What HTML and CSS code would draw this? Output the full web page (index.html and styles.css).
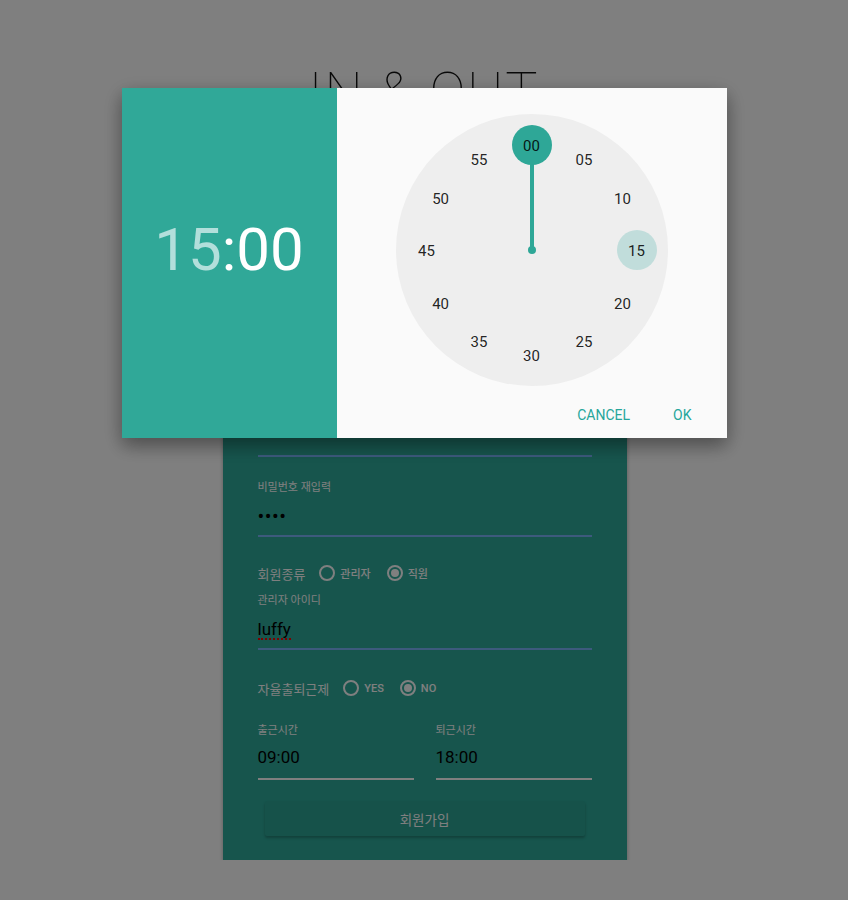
FILE: index.html
```html
<!DOCTYPE html>
<html lang="ko">
<head>
<meta charset="UTF-8">
<meta name="viewport" content="width=device-width, initial-scale=1.0">
<title>IN &amp; OUT - 회원가입</title>
<link rel="stylesheet" href="styles.css">
</head>
<body>
    <div class="page">
        <h1 class="logo">IN &amp; OUT</h1>

        <!-- Join form -->
        <form class="join-card">
            <div class="field">
                <label>아이디</label>
                <div class="value">luffy01</div>
            </div>
            <div class="field">
                <label>이름</label>
                <div class="value">몽키 D. 루피</div>
            </div>
            <div class="field">
                <label>비밀번호</label>
                <div class="value dots">••••</div>
            </div>
            <div class="field">
                <label>비밀번호 재입력</label>
                <div class="value dots">••••</div>
            </div>

            <div class="choice-row type-row">
                <span class="choice-title">회원종류</span>
                <span class="option"><i class="radio"></i>관리자</span>
                <span class="option"><i class="radio checked"></i>직원</span>
            </div>

            <div class="field admin-field">
                <label>관리자 아이디</label>
                <div class="value"><span class="misspelled">luffy</span></div>
            </div>

            <div class="choice-row flex-row">
                <span class="choice-title">자율출퇴근제</span>
                <span class="option"><i class="radio"></i>YES</span>
                <span class="option"><i class="radio checked"></i>NO</span>
            </div>

            <div class="time-row">
                <div class="field time-field">
                    <label>출근시간</label>
                    <div class="value">09:00</div>
                </div>
                <div class="field time-field">
                    <label>퇴근시간</label>
                    <div class="value">18:00</div>
                </div>
            </div>

            <button type="button" class="join-btn">회원가입</button>
        </form>
    </div>

    <!-- Time picker modal -->
    <div class="backdrop"></div>
    <div class="timepicker">
        <div class="tp-display">
            <span class="tp-hours">15</span><span class="tp-minutes">:00</span>
        </div>
        <div class="tp-body">
            <div class="clock-face">
                <div class="clock-hand"></div>
                <div class="clock-center"></div>
                <span class="tick selected" style="--a: 0deg">00</span>
                <span class="tick" style="--a: 30deg">05</span>
                <span class="tick" style="--a: 60deg">10</span>
                <span class="tick hover" style="--a: 90deg">15</span>
                <span class="tick" style="--a: 120deg">20</span>
                <span class="tick" style="--a: 150deg">25</span>
                <span class="tick" style="--a: 180deg">30</span>
                <span class="tick" style="--a: 210deg">35</span>
                <span class="tick" style="--a: 240deg">40</span>
                <span class="tick" style="--a: 270deg">45</span>
                <span class="tick" style="--a: 300deg">50</span>
                <span class="tick" style="--a: 330deg">55</span>
            </div>
            <div class="tp-actions">
                <button type="button" class="tp-btn">Cancel</button>
                <button type="button" class="tp-btn">OK</button>
            </div>
        </div>
    </div>
</body>
</html>
```

FILE: styles.css
```css
/* General */
* {
    margin: 0;
    padding: 0;
    box-sizing: border-box;
}

body {
    background: #ffffff;
    font-family: Roboto, "Noto Sans CJK KR", sans-serif;
    color: #000;
}

.page {
    display: flex;
    flex-direction: column;
    align-items: center;
}

/* Title */
.logo {
    margin-top: 62px;
    margin-bottom: 85px;
    font-size: 54px;
    line-height: 60px;
    font-weight: 100;
    letter-spacing: 2px;
    color: #111;
}

/* Join form */
.join-card {
    width: 404px;
    margin-left: 1px;
    padding: 10px 35px 24px;
    background: #2eab9b;
    box-shadow: 0 2px 4px rgba(0, 0, 0, 0.3);
}

.field {
    padding-top: 22px;
}

.field label {
    display: block;
    font-size: 11px;
    line-height: 18px;
    color: #ffffff;
}

.field .value {
    height: 40px;
    line-height: 38px;
    font-size: 17px;
    border-bottom: 2px solid #7ab4fa;
}

.field .dots {
    font-size: 20px;
    letter-spacing: 0.5px;
}

.misspelled {
    border-bottom: 2px dotted #ff0000;
    line-height: 18px;
    display: inline-block;
}

.admin-field {
    padding-top: 9px;
}

/* Radio rows */
.choice-row {
    display: flex;
    align-items: center;
    height: 20px;
    color: #ffffff;
}

.type-row {
    margin-top: 26px;
}

.flex-row {
    margin-top: 28px;
}

.choice-title {
    font-size: 13px;
    margin-right: 14px;
}

.option {
    display: flex;
    align-items: center;
    gap: 5px;
    margin-right: 16px;
    font-size: 11px;
    font-weight: 500;
}

.radio {
    width: 16px;
    height: 16px;
    border: 2px solid #ffffff;
    border-radius: 50%;
    display: flex;
    align-items: center;
    justify-content: center;
}

.radio.checked::after {
    content: "";
    width: 8px;
    height: 8px;
    border-radius: 50%;
    background: #ffffff;
}

/* Time fields */
.time-row {
    display: grid;
    grid-template-columns: 1fr 1fr;
    gap: 22px;
    padding-top: 2px;
}

.time-field .value {
    line-height: 34px;
    border-bottom-color: #ffffff;
}

.join-btn {
    display: block;
    width: 320px;
    height: 35px;
    margin: 21px auto 0;
    border: none;
    border-radius: 2px;
    background: #2ca495;
    color: #ffffff;
    font-family: Roboto, "Noto Sans CJK KR", sans-serif;
    font-size: 13.5px;
    box-shadow: 0 2px 3px rgba(0, 0, 0, 0.25);
}

/* Modal */
.backdrop {
    position: fixed;
    inset: 0;
    background: rgba(0, 0, 0, 0.5);
}

.timepicker {
    position: fixed;
    top: 88px;
    left: 0;
    right: 0;
    margin: 0 auto;
    width: 605px;
    height: 350px;
    display: flex;
    box-shadow: 0 8px 17px rgba(0, 0, 0, 0.25), 0 6px 20px rgba(0, 0, 0, 0.2);
}

.tp-display {
    width: 215px;
    background: #30a898;
    display: flex;
    align-items: center;
    justify-content: center;
    padding-bottom: 26px;
    font-size: 60px;
    font-weight: 400;
    line-height: 1;
}

.tp-hours {
    color: #b2dfdb;
}

.tp-minutes {
    color: #ffffff;
}

.tp-body {
    flex: 1;
    background: #fafafa;
    display: flex;
    flex-direction: column;
}

/* Clock */
.clock-face {
    position: relative;
    width: 272px;
    height: 272px;
    margin: 26px auto 0;
    border-radius: 50%;
    background: #eeeeee;
}

.clock-hand {
    position: absolute;
    left: 50%;
    bottom: 50%;
    width: 4px;
    height: 86px;
    margin-left: -2px;
    background: #2ea797;
}

.clock-center {
    position: absolute;
    left: 50%;
    top: 50%;
    width: 8px;
    height: 8px;
    margin: -4px 0 0 -4px;
    border-radius: 50%;
    background: #2ea797;
}

.tick {
    position: absolute;
    left: 50%;
    top: 50%;
    width: 40px;
    height: 40px;
    margin: -20px 0 0 -20px;
    padding-top: 2px;
    border-radius: 50%;
    line-height: 38px;
    text-align: center;
    font-size: 15px;
    color: rgba(0, 0, 0, 0.87);
    transform: rotate(var(--a)) translateY(-105px) rotate(calc(-1 * var(--a)));
}

.tick.selected {
    background: #2ea797;
}

.tick.hover {
    background: rgba(38, 166, 154, 0.22);
}

/* Actions */
.tp-actions {
    display: flex;
    justify-content: flex-end;
    gap: 11px;
    padding: 11px 19px 0;
}

.tp-btn {
    height: 36px;
    padding: 0 16px;
    border: none;
    background: none;
    font-family: Roboto, sans-serif;
    font-size: 14px;
    text-transform: uppercase;
    color: #26a69a;
}
```
